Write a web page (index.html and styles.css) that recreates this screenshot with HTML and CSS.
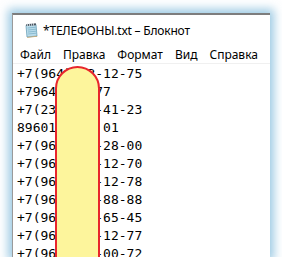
FILE: index.html
```html
<!DOCTYPE html>
<html lang="ru">
<head>
<meta charset="UTF-8">
<title>*ТЕЛЕФОНЫ.txt – Блокнот</title>
<link rel="stylesheet" href="styles.css">
</head>
<body>

<!-- окно блокнота -->
<div class="window">
  <div class="titlebar">
    <svg class="app-icon" width="14" height="15" viewBox="0 0 14 15">
      <path d="M2 2.5 L12 1.5 L13 13 L3 14 Z" fill="#b9dceb" stroke="#6a9fb8" stroke-width="0.8"/>
      <path d="M3.6 5 L11.8 4.2 M3.8 7 L12 6.2 M4 9 L12.2 8.2 M4.2 11 L12.4 10.2" stroke="#7fb3c9" stroke-width="0.8"/>
      <path d="M3 14 L13 13 L13.4 13.8 L3.4 14.8 Z" fill="#c8a56a"/>
      <path d="M2.2 1.2 L11.8 0.3 L12 2.2 L2.4 3.1 Z" fill="#4a5560"/>
      <path d="M3.5 0 V3 M5.5 0 V3 M7.5 0 V2.8 M9.5 0 V2.6" stroke="#e8eef2" stroke-width="0.7"/>
    </svg>
    <span class="title">*ТЕЛЕФОНЫ.txt – Блокнот</span>
  </div>
  <div class="menu">
    <span>Файл</span>
    <span>Правка</span>
    <span>Формат</span>
    <span>Вид</span>
    <span>Справка</span>
  </div>
  <div class="editor">
<pre>+7(964)123-12-75
+79645551177
+7(234)567-41-23
8960123450 01
+7(960)777-28-00
+7(960)777-12-70
+7(960)777-12-78
+7(960)777-88-88
+7(960)777-65-45
+7(960)777-12-77
+7(960)777-00-72</pre>
    <!-- закрашенная часть номеров -->
    <div class="marker"></div>
  </div>
</div>

</body>
</html>
```

FILE: styles.css
```css
body {
  margin: 0;
  background-color: #ffffff;
  font-family: 'Noto Sans', 'Open Sans', sans-serif;
}
.window {
  margin: 13px 0 0 12px;
  width: 257px;
  height: 242px;
  background-color: #ffffff;
  border-top: 2px solid #7d7d7d;
  border-left: 1px solid #9a9a9a;
  box-shadow: 0 0 9px 4px rgba(115, 180, 215, 0.7);
  overflow: hidden;
  display: flex;
  flex-direction: column;
}
.titlebar {
  height: 30px;
  display: flex;
  align-items: center;
  padding-left: 11px;
  flex-shrink: 0;
}
.app-icon {
  margin-right: 5px;
}
.title {
  font-size: 12px;
  letter-spacing: -0.2px;
  color: #000;
}
.menu {
  height: 18px;
  display: flex;
  align-items: center;
  gap: 12px;
  padding-left: 7px;
  font-size: 12px;
  color: #000;
  border-bottom: 1px solid #f0f0f0;
  flex-shrink: 0;
}
.editor {
  position: relative;
  flex: 1;
  padding: 1px 0 0 4px;
}
.editor pre {
  margin: 0;
  font-family: 'DejaVu Sans Mono', monospace;
  font-size: 13px;
  line-height: 18px;
  color: #000;
}
.marker {
  position: absolute;
  left: 42px;
  top: 2px;
  width: 41px;
  height: 215px;
  background-color: #fdf59c;
  border: 2px solid #e8262c;
  border-radius: 23px;
}
```
